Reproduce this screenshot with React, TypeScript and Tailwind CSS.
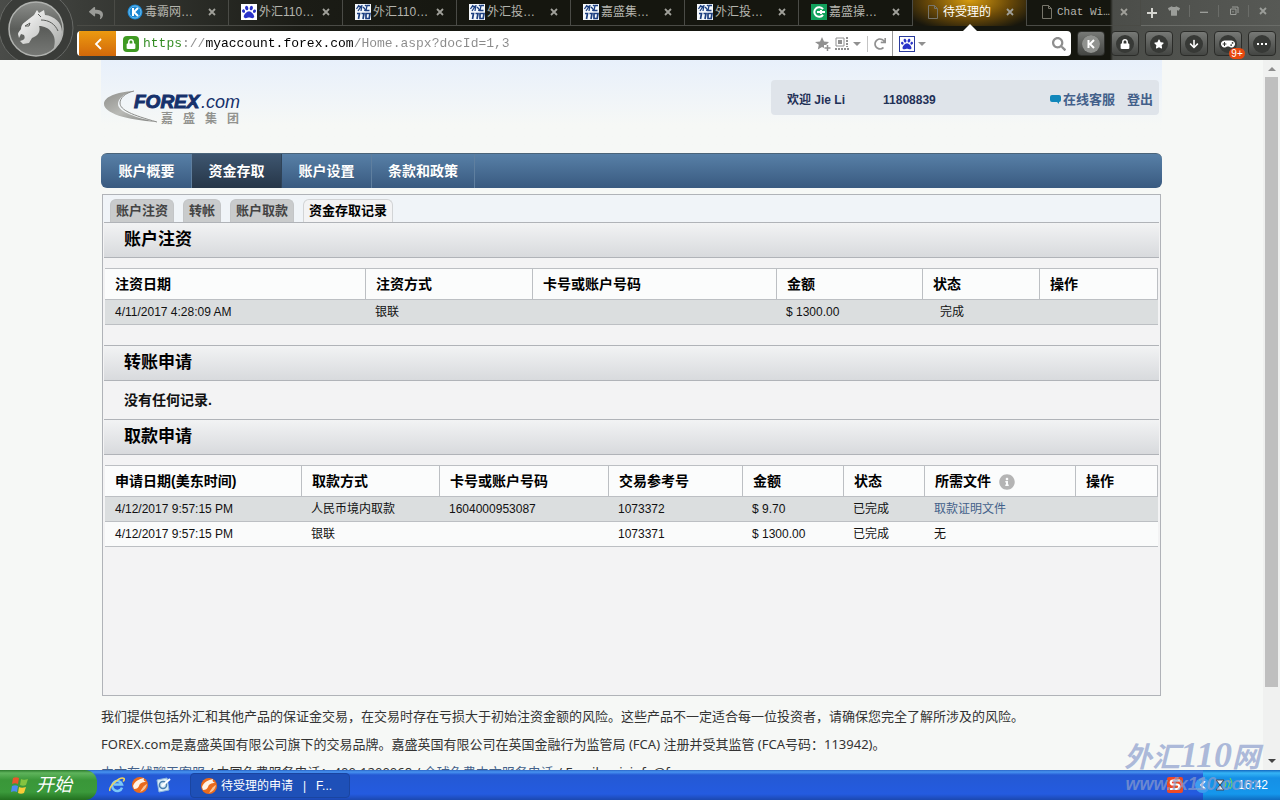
import { FaArrowDown, FaGamepad, FaInfoCircle, FaLock, FaPaw, FaRedo, FaReply, FaSearch, FaStar, FaTshirt } from 'react-icons/fa';
import type { ReactNode } from 'react';

const browserTabs = [
  { title: '毒霸网…', icon: 'k' },
  { title: '外汇110…', icon: 'paw' },
  { title: '外汇110…', icon: 'fx' },
  { title: '外汇投…', icon: 'fx' },
  { title: '嘉盛集…', icon: 'fx' },
  { title: '外汇投…', icon: 'fx' },
  { title: '嘉盛操…', icon: 'green' },
  { title: '待受理的', icon: 'page', active: true },
  { title: 'Chat Wi…', icon: 'page', mono: true },
];

const navItems = ['账户概要', '资金存取', '账户设置', '条款和政策'];
const subTabs = ['账户注资', '转帐', '账户取款', '资金存取记录'];

const deposits = {
  columns: [
    { label: '注资日期', width: 'w-[261px]' },
    { label: '注资方式', width: 'w-[167px]' },
    { label: '卡号或账户号码', width: 'w-[244px]' },
    { label: '金额', width: 'w-[146px]' },
    { label: '状态', width: 'w-[117px]' },
    { label: '操作', width: 'w-[118px]' },
  ],
  rows: [['4/11/2017 4:28:09 AM', '银联', '', '$ 1300.00', '完成', '']],
};

const withdrawals = {
  columns: [
    { label: '申请日期(美东时间)', width: 'w-[197px]' },
    { label: '取款方式', width: 'w-[138px]' },
    { label: '卡号或账户号码', width: 'w-[169px]' },
    { label: '交易参考号', width: 'w-[134px]' },
    { label: '金额', width: 'w-[101px]' },
    { label: '状态', width: 'w-[81px]' },
    { label: '所需文件', width: 'w-[151px]', info: true },
    { label: '操作', width: 'w-[82px]' },
  ],
  rows: [
    ['4/12/2017 9:57:15 PM', '人民币境内取款', '1604000953087', '1073372', '$ 9.70', '已完成', '取款证明文件', ''],
    ['4/12/2017 9:57:15 PM', '银联', '', '1073371', '$ 1300.00', '已完成', '无', ''],
  ],
};

function TabIcon({ type }: { type: string }) {
  if (type === 'k') {
    return (
      <svg viewBox="0 0 16 16" className="size-4 shrink-0">
        <circle cx="8" cy="8" r="7.5" fill="#1b86d2" />
        <circle cx="8" cy="8" r="6" fill="none" stroke="#6cc0f2" />
        <path d="M6 4v8M11 4 7 8l4 4" stroke="#fff" strokeWidth="2" fill="none" />
      </svg>
    );
  }
  if (type === 'paw') {
    return (
      <span className="grid size-4 shrink-0 place-items-center bg-white">
        <FaPaw className="size-3.5 text-[#2a33c8]" />
      </span>
    );
  }
  if (type === 'fx') {
    return (
      <svg viewBox="0 0 16 16" className="size-4 shrink-0">
        <rect width="16" height="16" fill="#f4f8fc" />
        <path d="M4 1 1.500 5M3 2.500h3L3 7M7 1 6 7M8 3l2 2M10 1l1 1M9.500 7l1-2M15 1.500h-3l-1 5h3.500" stroke="#1c3f80" strokeWidth="1.300" fill="none" />
        <path d="M2 9.500h2.500L3.500 15M6.500 9.500H9L8 15M11 9.500h4l-.8 5H11z" stroke="#1c3f80" strokeWidth="1.700" fill="none" />
      </svg>
    );
  }
  if (type === 'green') {
    return (
      <svg viewBox="0 0 16 16" className="size-4 shrink-0">
        <rect width="16" height="16" fill="#12a15c" />
        <path d="M12 5.200A4.800 4.800 0 1 0 12 10.800M6 8h8M10 6v4" stroke="#fff" strokeWidth="2" fill="none" />
      </svg>
    );
  }
  return (
    <svg viewBox="0 0 16 16" className="size-4 shrink-0">
      <path d="M3.500 1.500h6l3 3v10h-9zM9.500 1.500v3h3" stroke="#77756a" fill="none" />
    </svg>
  );
}

function CloseIcon({ className = '' }: { className?: string }) {
  return (
    <svg viewBox="0 0 8 8" className={`size-2 ${className}`}>
      <path d="M1 1l6 6M7 1 1 7" stroke="currentColor" strokeWidth="1.800" />
    </svg>
  );
}

function ToolButton({ label, children }: { label: string; children: ReactNode }) {
  return (
    <button
      aria-label={label}
      className="relative grid h-[25px] w-7 shrink-0 place-items-center rounded-sm border border-[#2b2c29] bg-linear-to-b from-[#777976] to-[#444643] text-white"
    >
      <span className="grid size-[18px] place-items-center rounded-full bg-[#373936] text-[10px]">{children}</span>
    </button>
  );
}

function BrowserHeader() {
  return (
    <header className="flex h-[60px] shrink-0 bg-[linear-gradient(to_right,#4a4c49_0,#3b3d39_80px,#1b1c16_300px,#15160f_500px,#15160f_calc(100%_-_170px),#4b4d49_calc(100%_-_167px),#575955_100%)]">
      <div className="w-[77px] shrink-0 overflow-hidden">
        <svg viewBox="0 0 77 60" className="h-[60px] w-[77px]">
          <defs>
            <linearGradient id="orb" x1="0" y1="0" x2="0" y2="1">
              <stop offset="0" stopColor="#8c8e8b" />
              <stop offset="0.500" stopColor="#5b5d5a" />
              <stop offset="1" stopColor="#777976" />
            </linearGradient>
            <linearGradient id="beast" x1="0" y1="0" x2="1" y2="1">
              <stop offset="0" stopColor="#ffffff" />
              <stop offset="1" stopColor="#a5a7a4" />
            </linearGradient>
          </defs>
          <circle cx="36" cy="28" r="37" fill="#3a3c39" stroke="#666865" />
          <circle cx="36" cy="29" r="27" fill="url(#orb)" stroke="#b0b2af" strokeWidth="1.500" />
          <path
            d="M34 15l3-5 2 3 5-3 1 5c9 1 17 7 17 17 0 8-4 14-9 19 2-6 3-13-1-18-3-5-8-7-13-7 2 5-1 10-7 12l-3 5-6 1-3-3 3-1c2-1 2-3 1-5l-3-1-2 4-1-4c0-2 2-3 3-5 0-3 1-5 4-7z"
            fill="url(#beast)"
          />
          <path d="M25 26l5-3-1 3zM41 20c8 0 14 4 17 11M38 14l3 3" stroke="#5a5c59" fill="none" />
        </svg>
      </div>
      <div className="flex min-w-0 flex-1 flex-col">
        <div className="flex h-[26px] font-['Liberation_Sans','Noto_Sans_CJK_SC',sans-serif] text-xs text-[#b4b4ad]">
          <button aria-label="后退" className="grid w-[38px] shrink-0 place-items-center border-r border-b border-[#4a4b46]">
            <FaReply className="size-3.5 text-[#9a9b97]" />
          </button>
          {browserTabs.map((tab, index) => (
            <div
              key={index}
              className={`relative flex w-[114px] items-center gap-0.5 border-r border-[#4a4b46] pr-3 pb-0.5 pl-3 ${
                tab.active
                  ? 'bg-[radial-gradient(ellipse_at_50%_0%,#d79c10_0%,#6b4a08_50%,#17160d_90%)] text-white'
                  : 'border-b'
              }`}
            >
              <TabIcon type={tab.icon} />
              <button className={`min-w-0 flex-1 truncate text-left leading-4 ${tab.mono ? "font-['Liberation_Mono',monospace] text-[11px]" : ''}`}>
                {tab.title}
              </button>
              <button aria-label="关闭标签">
                <CloseIcon className="text-[#a0a09a]" />
              </button>
              {tab.active && (
                <svg viewBox="0 0 14 7" className="absolute top-6 left-1/2 h-[7px] w-3.5 -translate-x-1/2">
                  <path d="M0 7 7 0l7 7z" fill="#fff" />
                </svg>
              )}
            </div>
          ))}
          <div className="flex min-w-0 flex-1 items-center justify-around border-b border-[#6a6c68] pr-2 pb-1 text-[#9b9d99]">
            <button aria-label="新标签" className="pt-1">
              <svg viewBox="0 0 12 12" className="size-3">
                <path d="M6 1v10M1 6h10" stroke="#d5d5d0" strokeWidth="2" />
              </svg>
            </button>
            <button aria-label="皮肤">
              <FaTshirt className="size-3" />
            </button>
            <span className="h-3 w-px bg-[#6a6c68]" />
            <button aria-label="最小化">
              <svg viewBox="0 0 9 9" className="size-2">
                <path d="M0 6h9" stroke="currentColor" strokeWidth="1.500" />
              </svg>
            </button>
            <span className="h-3 w-px bg-[#6a6c68]" />
            <button aria-label="还原">
              <svg viewBox="0 0 10 10" className="size-2.5">
                <path d="M3 1h6v6M1.500 3h5.500v5.500h-5.500zM4 5v1.500" stroke="currentColor" fill="none" />
              </svg>
            </button>
            <span className="h-3 w-px bg-[#6a6c68]" />
            <button aria-label="关闭">
              <CloseIcon />
            </button>
          </div>
        </div>

        <div className="flex items-center gap-1.5 pt-[5px] pr-1">
          <div className="flex h-[25px] min-w-0 flex-1 items-center overflow-hidden rounded-sm bg-white">
            <button aria-label="返回" className="ml-0.5 grid h-[25px] w-[37px] shrink-0 place-items-center bg-linear-to-b from-[#ec9a10] to-[#d2680a]">
              <svg viewBox="0 0 10 12" className="h-3 w-2.5">
                <path d="M8 1 3 6l5 5" stroke="#fff" strokeWidth="1.800" fill="none" />
              </svg>
            </button>
            <span className="mr-1 ml-[7px] grid size-4 shrink-0 place-items-center rounded-sm bg-[#3f9a22] text-white">
              <FaLock className="size-2.5" />
            </span>
            <input
              aria-label="地址"
              defaultValue="https://myaccount.forex.com/Home.aspx?docId=1,3"
              className="min-w-0 flex-1 bg-[linear-gradient(to_right,#2f8a1e_39px,#8a8a8a_39px,#8a8a8a_62px,#000_62px,#000_211px,#8a8a8a_211px)] bg-clip-text font-['Liberation_Mono',monospace] text-[13px] text-transparent outline-none"
            />
            <div className="flex items-center gap-1 pr-1.5 text-[#909090]">
              <button aria-label="收藏">
                <svg viewBox="0 0 16 14" className="h-3.5 w-4">
                  <path d="M7 0l2 4.500 5 .5-3 3H9v3l-2-1-4.200 2.500 1-4.800L0 5l5-.5z" fill="currentColor" />
                  <path d="M12.500 8v6M9.500 11h6" stroke="currentColor" strokeWidth="1.500" />
                </svg>
              </button>
              <button aria-label="二维码">
                <svg viewBox="0 0 14 14" className="size-3.5">
                  <path d="M1 1h8v8H1z" fill="none" stroke="currentColor" />
                  <path d="M3 3h4v4H3z" fill="currentColor" />
                  <path d="M12 0v10M0 12h14" stroke="currentColor" strokeWidth="2" strokeDasharray="2 1" />
                </svg>
              </button>
              <svg viewBox="0 0 8 4" className="h-1 w-2">
                <path d="M0 0h8L4 4z" fill="currentColor" />
              </svg>
              <span className="mx-0.5 h-4 w-px bg-[#c4c4c4]" />
              <button aria-label="刷新">
                <FaRedo className="size-3" />
              </button>
            </div>
            <div className="flex h-[25px] w-[179px] shrink-0 items-center border-l border-[#999] pr-[5px] pl-1.5">
              <span className="grid size-4 shrink-0 place-items-center border border-[#2a3b9c]">
                <FaPaw className="size-3 text-[#2a33c8]" />
              </span>
              <svg viewBox="0 0 8 4" className="ml-[3px] h-1 w-2 shrink-0 text-[#909090]">
                <path d="M0 0h8L4 4z" fill="currentColor" />
              </svg>
              <input aria-label="搜索" className="min-w-0 flex-1 px-1 text-xs outline-none" />
              <button aria-label="搜索按钮">
                <FaSearch className="size-3.5 text-[#8e8e8e]" />
              </button>
            </div>
          </div>
          <div className="flex w-[199px] shrink-0 justify-between">
            <ToolButton label="K">
              <svg viewBox="0 0 18 18" className="size-[18px]">
                <circle cx="9" cy="9" r="9" fill="#90928f" />
                <path d="M6.500 5v8M12 5 8 9l4 4" stroke="#fff" strokeWidth="2" fill="none" />
              </svg>
            </ToolButton>
            <ToolButton label="密码"><FaLock /></ToolButton>
            <ToolButton label="收藏夹"><FaStar /></ToolButton>
            <ToolButton label="下载"><FaArrowDown /></ToolButton>
            <ToolButton label="游戏">
              <FaGamepad className="size-3.5" />
              <span className="absolute -right-1 -bottom-1 rounded-md bg-[#e8480e] px-0.5 font-['Liberation_Sans',sans-serif] text-[10px] leading-[11px] text-white">9+</span>
            </ToolButton>
            <ToolButton label="更多">
              <svg viewBox="0 0 10 2" className="h-0.5 w-2.5">
                <path d="M0 0h2v2H0zM4 0h2v2H4zM8 0h2v2H8z" fill="#fff" />
              </svg>
            </ToolButton>
          </div>
        </div>
      </div>
    </header>
  );
}

function Logo() {
  return (
    <svg viewBox="0 0 140 38" className="h-[38px] w-[140px]" role="img" aria-label="FOREX.com 嘉盛集团">
      <defs>
        <linearGradient id="swoosh" x1="0" y1="0" x2="1" y2="1">
          <stop offset="0" stopColor="#8f8f8b" />
          <stop offset="0.500" stopColor="#b9bab6" />
          <stop offset="1" stopColor="#828380" />
        </linearGradient>
      </defs>
      <path d="M31 2C13 3 1 8 1 15c0 9 22 16 53 18C34 29 15 23 15 15c0-5 5-10 16-13z" fill="url(#swoosh)" />
      <path d="M31 2C22 4 17 9 17 14c0 7 12 12 37 19" fill="none" stroke="#8a8b88" />
      <text x="31" y="19" fontFamily="Liberation Sans, sans-serif" fontSize="19" fontWeight="bold" fontStyle="italic" fill="#16316b" stroke="#16316b">
        FOREX
      </text>
      <text x="98" y="19" fontFamily="Liberation Sans, sans-serif" fontSize="18" fontStyle="italic" fill="#16316b">
        .com
      </text>
      {['嘉', '盛', '集', '团'].map((char, i) => (
        <text key={char} x={58 + i * 22} y="34" fontFamily="Noto Sans CJK SC, sans-serif" fontSize="12" fontWeight="bold" fill="#92938f">
          {char}
        </text>
      ))}
    </svg>
  );
}

function SectionTitle({ children }: { children: ReactNode }) {
  return (
    <h2 className="mx-px h-9 border-y border-[#b0b3b8] bg-linear-to-b from-[#f2f3f4] to-[#d8dadd] pl-5 text-[17px] leading-[34px] font-bold text-black">
      {children}
    </h2>
  );
}

type TableProps = {
  columns: { label: string; width: string; info?: boolean }[];
  rows: string[][];
};

function RecordTable({ columns, rows }: TableProps) {
  return (
    <div className="pt-2.5 pr-[3px] pl-0.5">
      <table className="w-full table-fixed border-separate border-spacing-0 text-left text-xs text-[#111]">
        <thead>
          <tr className="h-8 bg-[#fbfcfc]">
            {columns.map((col) => (
              <th key={col.label} className={`${col.width} border-y border-r border-[#bcbfc3] py-0 pl-2.5 text-sm leading-5 font-bold whitespace-nowrap text-black`}>
                {col.label}
                {col.info && <FaInfoCircle className="ml-2 inline size-4 text-[#b4b4b4]" />}
              </th>
            ))}
          </tr>
        </thead>
        <tbody>
          {rows.map((row, index) => (
            <tr key={index} className={`h-[25px] ${index % 2 ? 'bg-[#fafbfb]' : 'bg-[#dbdedf]'}`}>
              {row.map((cell, i) => (
                <td key={i} className={`border-b border-[#bcbfc3] py-0 leading-4 whitespace-nowrap ${cell === '完成' ? 'pl-[17px]' : i === 0 ? 'pl-2.5' : 'pl-[9px]'}`}>
                  {cell === '取款证明文件' ? <a href="#" className="text-[#43618a]">{cell}</a> : cell}
                </td>
              ))}
            </tr>
          ))}
        </tbody>
      </table>
    </div>
  );
}

function AccountPage() {
  return (
    <div className="flex min-h-0 flex-1 bg-[#f6f8f6]">
      <div className="min-w-0 flex-1 overflow-hidden">
        <div className="mx-auto max-w-[1061px] font-['Liberation_Sans','Noto_Sans_CJK_SC',sans-serif]">
          <div className="flex h-[93px] items-start justify-between bg-linear-to-b from-[#e8f0fb] to-[#f6f8f6] to-70% pr-[3px] pl-0.5">
            <a href="#" className="pt-[29px]">
              <Logo />
            </a>
            <div className="mt-5 flex h-[35px] w-[388px] items-center rounded-sm bg-[#dfe4ea] pt-1 pr-1.5 pl-4 text-xs font-bold text-[#1f3157]">
              <span>欢迎 Jie Li</span>
              <span className="ml-[38px]">11808839</span>
              <div className="ml-auto flex gap-3 text-[13px] text-[#43608a]">
                <a href="#" className="flex items-center gap-0.5">
                  <svg viewBox="0 0 11 9" className="h-[9px] w-[11px]">
                    <path d="M2 0h7a2 2 0 0 1 2 2v3a2 2 0 0 1-2 2v2L7 7H2a2 2 0 0 1-2-2V2a2 2 0 0 1 2-2z" fill="#1187bb" />
                  </svg>
                  在线客服
                </a>
                <a href="#">登出</a>
              </div>
            </div>
          </div>

          <nav className="flex h-[35px] overflow-hidden rounded-md border-t border-[#4b6479] bg-linear-to-b from-[#5880a7] to-[#395a80] pl-px text-sm font-bold text-white">
            {navItems.map((item, index) => (
              <a
                key={item}
                href="#"
                className={`flex min-w-[90px] items-center justify-center border-r px-4 text-shadow-2xs ${
                  index === 1 ? 'border-[#2f4358] bg-linear-to-b from-[#3e5670] to-[#263648]' : 'border-[#5f7f9f]'
                }`}
              >
                {item}
              </a>
            ))}
          </nav>

          <section className="mx-px mt-1.5 min-h-[502px] border border-[#b0b3b8] bg-[#f3f3f4]">
            <div className="flex h-[27px] items-end gap-[9px] bg-[#f0f4f8] pl-[7px]">
              {subTabs.map((tab) => (
                <button
                  key={tab}
                  className={`h-[23px] rounded-t-md border border-b-0 px-[5px] text-[13px] leading-5 font-bold ${
                    tab === '资金存取记录' ? 'border-[#d2d4d6] bg-[#f3f3f4] text-black' : 'border-[#c3c5c7] bg-[#c9cbcc] text-[#444]'
                  }`}
                >
                  {tab}
                </button>
              ))}
            </div>
            <SectionTitle>账户注资</SectionTitle>
            <RecordTable {...deposits} />
            <div className="mt-5">
              <SectionTitle>转账申请</SectionTitle>
            </div>
            <p className="h-[38px] pl-[21px] text-sm leading-[38px] font-bold text-[#111]">没有任何记录.</p>
            <SectionTitle>取款申请</SectionTitle>
            <RecordTable {...withdrawals} />
          </section>

          <footer className="pt-1.5 font-['Noto_Sans','Noto_Sans_CJK_SC',sans-serif] text-[13px] leading-7 whitespace-nowrap text-[#333]">
            <p>我们提供包括外汇和其他产品的保证金交易，在交易时存在亏损大于初始注资金额的风险。这些产品不一定适合每一位投资者，请确保您完全了解所涉及的风险。</p>
            <p>FOREX.com是嘉盛英国有限公司旗下的交易品牌。嘉盛英国有限公司在英国金融行为监管局 (FCA) 注册并受其监管 (FCA号码：113942)。</p>
            <p>
              <a href="#" className="text-[#43618a]">中文在线聊天客服</a> / 中国免费服务电话：400-1200068 /{' '}
              <a href="#" className="text-[#43618a]">全球免费中文服务电话</a> / Email: asiainfo@forex.com
            </p>
          </footer>
        </div>
      </div>

      <div className="flex w-[17px] shrink-0 flex-col items-center bg-[#f0f1f0]">
        <svg viewBox="0 0 8 17" className="h-[17px] w-2 shrink-0">
          <path d="M0 11h8L4 7z" fill="#8d8d8d" />
        </svg>
        <div className="w-[13px] flex-1 bg-[#bfbfbf]" />
        <div className="flex h-[83px] items-end pb-[7px]">
          <svg viewBox="0 0 8 4" className="h-1 w-2">
            <path d="M0 0h8L4 4z" fill="#444" />
          </svg>
        </div>
      </div>
    </div>
  );
}

function LiebaoIcon() {
  return (
    <svg viewBox="0 0 16 16" className="size-4 shrink-0">
      <circle cx="8" cy="8" r="8" fill="#ea6a1c" />
      <path d="M1 9c2-5 6-7 11-8-1 2 0 3 2 4-4 0-6 1-7 4-1 2-2 3-5 3z" fill="#fff3e6" />
      <path d="M15 7c-1 5-4 7-7 8 2-3 3-6 7-8z" fill="#f9c497" />
    </svg>
  );
}

function Taskbar() {
  return (
    <footer className="flex h-[30px] shrink-0 items-stretch bg-[linear-gradient(to_bottom,#2a66c8_0,#4793f0_2px,#2459d4_5px,#245be0_24px,#1b48b0_100%)] font-['Liberation_Sans','Noto_Sans_CJK_SC',sans-serif] text-xs text-white">
      <button className="flex w-[97px] shrink-0 items-center gap-1.5 rounded-r-xl bg-[linear-gradient(to_bottom,#2b7a2c_0,#5fb45c_3px,#3a9739_10px,#3b9a3b_22px,#22701f_100%)] pl-2.5 text-lg italic">
        <svg viewBox="0 0 20 18" className="h-[18px] w-5">
          <path d="M3 2c2-1 4-1 6 0L8 8C6 7 4 7 2 8z" fill="#e8562c" />
          <path d="M11 3c2 1 4 1 7 0l-2 6c-2 1-4 1-6 0z" fill="#84c440" />
          <path d="M2 10c2-1 4-1 6 0l-1 6c-2-1-4-1-6 0z" fill="#4d8cf0" />
          <path d="M9 11c2 1 4 1 7 0l-2 6c-2 1-4 1-6 0z" fill="#f8cc38" />
        </svg>
        开始
      </button>
      <div className="flex w-[93px] shrink-0 items-center gap-[7px] pl-3">
        <button aria-label="Internet Explorer">
          <svg viewBox="0 0 16 16" className="size-4">
            <path d="M13 10.500A5 5 0 1 1 13 7.500H5" fill="none" stroke="#7cc8f8" strokeWidth="2.500" />
            <path d="M1 14C-1 10 11-1 15 1.500c1 1 0 2-1 3" fill="none" stroke="#f2d45a" strokeWidth="1.500" />
          </svg>
        </button>
        <button aria-label="猎豹浏览器">
          <LiebaoIcon />
        </button>
        <button aria-label="显示桌面">
          <svg viewBox="0 0 16 16" className="size-4">
            <path d="M2 3l10-2 2 12-10 2z" fill="#d8ecf8" stroke="#8fb8dc" />
            <circle cx="8" cy="8" r="3.500" fill="none" stroke="#4a7fae" strokeWidth="1.500" />
            <path d="M7 9l8-7" stroke="#fff" strokeWidth="2" />
          </svg>
        </button>
      </div>
      <button className="my-0.5 mt-[3px] flex w-40 items-center gap-1 rounded-sm border border-[#1a45a0] bg-[#1e50b8] pl-2.5">
        <LiebaoIcon />
        <span className="whitespace-pre">待受理的申请   |   F...</span>
      </button>
      <div className="mr-5 ml-auto flex items-center">
        <svg viewBox="0 0 16 16" className="size-4">
          <rect width="16" height="16" rx="2" fill="#ee4a25" />
          <path d="M13 3.500H6C3 3.500 3 7.500 6 7.500h4c3 0 3 4.500 0 4.500H3" stroke="#fff" strokeWidth="2.200" fill="none" />
        </svg>
      </div>
      <div className="flex w-[77px] shrink-0 items-center justify-between bg-[linear-gradient(to_bottom,#1368c0_0,#35b4f6_3px,#1590e6_8px,#1597ec_24px,#0f6cc0_100%)] pr-3 text-xs">
        <button aria-label="显示隐藏图标" className="-ml-2 grid size-[15px] place-items-center rounded-full bg-[#3d9df0]">
          <svg viewBox="0 0 6 8" className="h-2 w-1.5">
            <path d="M5 0 1 4l4 4" stroke="#fff" strokeWidth="1.800" fill="none" />
          </svg>
        </button>
        <svg viewBox="0 0 18 14" className="h-3.5 w-[18px]">
          <path d="M1 2h8L5 7l4 5H1l4-5z" fill="#e4ecf0" stroke="#445" />
          <path d="M10 3q2 3 0 6M13 2q3 4 0 8M15 0q4 6 0 11" stroke="#6fdc52" fill="none" />
        </svg>
        <span>16:42</span>
      </div>
    </footer>
  );
}

export default function App() {
  return (
    <div className="relative flex h-screen flex-col overflow-hidden">
      <BrowserHeader />
      <AccountPage />
      <Taskbar />
      {/* Watermark */}
      <div className="pointer-events-none absolute right-5 bottom-1.5 text-center font-['Liberation_Sans','Noto_Sans_CJK_SC',sans-serif] font-bold whitespace-nowrap text-[#8b9dcc]/70 italic">
        <div className="font-['Liberation_Serif','Noto_Sans_CJK_SC',serif] text-[28px] leading-8">
          外汇<span className="text-[36px]">110</span>网
        </div>
        <div className="text-lg leading-5">www.fx110.com</div>
      </div>
    </div>
  );
}
